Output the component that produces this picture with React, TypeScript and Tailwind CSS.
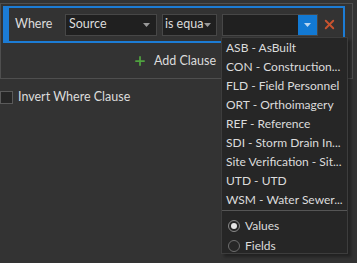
import { Plus, X } from 'lucide-react';

const options = [
    'ASB - AsBuilt',
    'CON - Construction...',
    'FLD - Field Personnel',
    'ORT - Orthoimagery',
    'REF - Reference',
    'SDI - Storm Drain In...',
    'Site Verification - Sit...',
    'UTD - UTD',
    'WSM - Water Sewer...',
];

function Caret(){
    return(
        <svg width="7" height="4" viewBox="0 0 7 4">
            <path d="M0 0 L7 0 L3.5 4 Z" fill="#9a9a9a" />
        </svg>
    )
}

export default function App(){
    return(
        <div className="relative w-[357px] h-[263px] bg-[#333333] text-[#dcdcdc] text-[12px] font-['Lato',sans-serif] overflow-hidden">

            <div className="pt-[3px]">
                <div className="w-[353px] h-[76px] border border-[#4f4f4f]">

                    {/* clause row */}
                    <div className="ml-[2px] mt-[2px] w-[342px] h-[37px] border-2 border-[#1c7cd5] flex items-center">
                        <div className="w-[4px] self-stretch bg-[#1c7cd5]"></div>
                        <span className="ml-[6px] w-[50px] text-[12.5px]">Where</span>

                        <div className="w-[92px] h-[22px] bg-[#202020] border border-[#474747] flex items-center justify-between pl-[3px] pr-[6px] text-[12.5px]">
                            <span>Source</span>
                            <Caret />
                        </div>

                        <div className="ml-[5px] w-[55px] h-[22px] bg-[#202020] border border-[#474747] flex items-center justify-between pl-[2px] pr-[5px] text-[12.5px]">
                            <span className="whitespace-nowrap">is equa</span>
                            <Caret />
                        </div>

                        <div className="ml-[5px] w-[96px] h-[22px] bg-[#202020] border border-[#474747] flex justify-end">
                            <div className="w-[19px] h-full bg-[#1279d3] flex items-center justify-center">
                                <svg width="7" height="4" viewBox="0 0 7 4">
                                    <path d="M0 0 L7 0 L3.5 4 Z" fill="#b9d6f2" />
                                </svg>
                            </div>
                        </div>

                        <X className="ml-[4px] w-[15px] h-[15px] text-[#c8532f]" strokeWidth={3} />
                    </div>

                    {/* add clause */}
                    <div className="h-[36px] flex items-center justify-center gap-[7px] pr-[4px]">
                        <Plus className="w-[14px] h-[14px] text-[#4fa33f]" strokeWidth={3} />
                        <span className="text-[12.5px]">Add Clause</span>
                    </div>
                </div>
            </div>

            <div className="mt-[9px] flex items-center gap-[5px]">
                <div className="w-[13px] h-[13px] bg-[#262626] border border-[#5a5a5a]"></div>
                <span className="text-[12.5px]">Invert Where Clause</span>
            </div>

            {/* open value list */}
            <div className="absolute left-[221px] top-[37px] w-[127px] h-[217px] bg-[#262626] border border-[#3d3d3d] shadow-[3px_3px_3px_rgba(0,0,0,0.35)]">
                <div>
                    {options.map((o) => (
                        <div key={o} className="h-[19px] pl-[4px] flex items-center whitespace-nowrap leading-none">
                            {o}
                        </div>
                    ))}
                </div>
                <div className="mt-[1px] h-px bg-[#555555]"></div>
                <div className="pt-[5px] pl-[6px]">
                    <div className="h-[20px] flex items-center gap-[5px]">
                        <div className="w-[12px] h-[12px] rounded-full border border-[#8a8a8a] flex items-center justify-center">
                            <div className="w-[6px] h-[6px] rounded-full bg-[#e6e6e6]"></div>
                        </div>
                        Values
                    </div>
                    <div className="h-[20px] flex items-center gap-[5px]">
                        <div className="w-[12px] h-[12px] rounded-full border border-[#6e6e6e]"></div>
                        Fields
                    </div>
                </div>
            </div>

        </div>
    )
}
